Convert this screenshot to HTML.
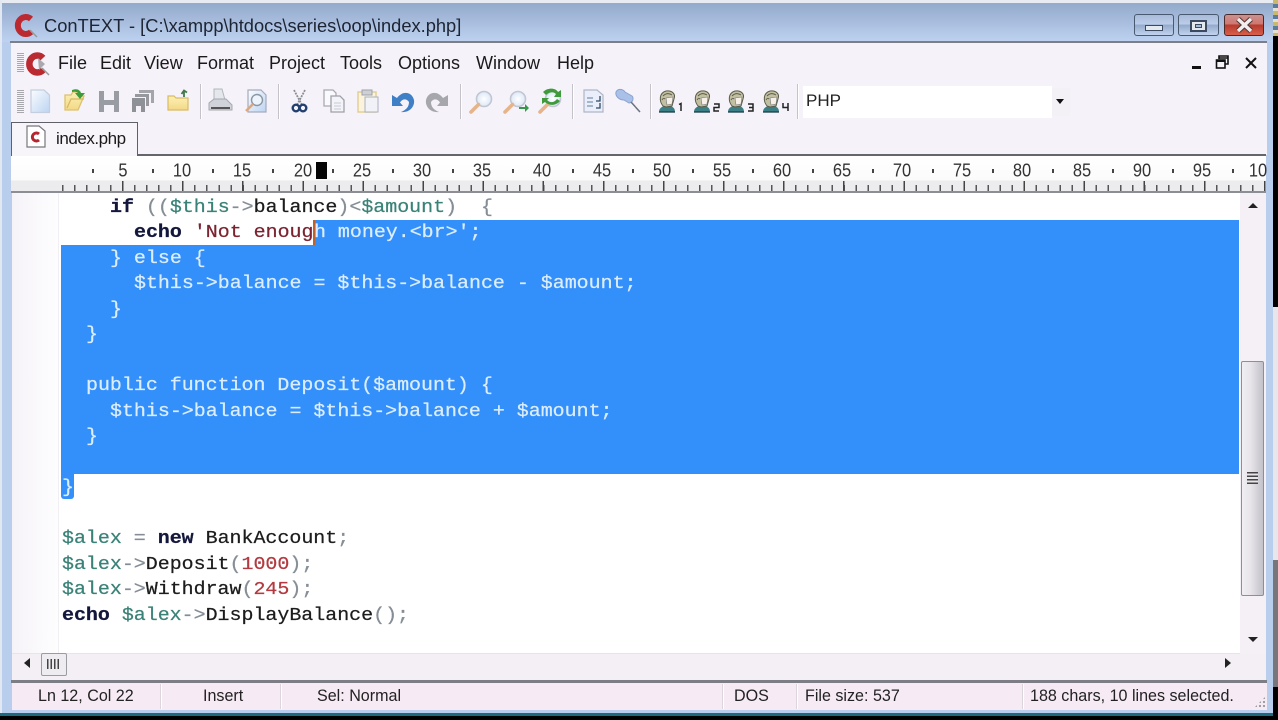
<!DOCTYPE html>
<html><head><meta charset="utf-8"><style>
html,body{margin:0;padding:0;width:1278px;height:720px;overflow:hidden;background:#000}
*{box-sizing:border-box}
.a{position:absolute}
#w{position:absolute;left:0;top:0;width:1273px;height:716px;background:#b9cdec;overflow:hidden;font-family:"Liberation Sans",sans-serif;color:#111}
.t{position:absolute;white-space:pre;line-height:20px}
.m{position:absolute;white-space:pre;top:53px;font-size:18px;line-height:20px;color:#1a1a1a}
.n{position:absolute;top:160px;font-size:17.5px;line-height:20px;color:#333;width:40px;text-align:center;transform:scale(.94,1.06)}
.d{position:absolute;top:169px;width:2px;height:4px;background:#444}
.c{position:absolute;white-space:pre;font-family:"Liberation Mono",monospace;font-size:19.95px;line-height:24px;height:24px;color:#222;-webkit-text-stroke:.25px currentColor;transform:scaleY(.94);transform-origin:0 60%}
.v{color:#3a8277}.p{color:#858d96}.k{color:#14173c;font-weight:bold}.s{color:#7b2330}.u{color:#b23a40}.i{color:#1c1c1c}
.x{color:#dcedff}
.sp{position:absolute;width:2px;top:84px;height:35px;background:#c3c3c8;border-right:1px solid #fff}
.st{position:absolute;top:685px;font-size:16.5px;line-height:22px;color:#222;white-space:pre;transform-origin:0 50%;transform:scaleX(.975)}
.ss{position:absolute;top:684px;height:25px;width:2px;background:#dcd6dc;border-right:1px solid #fff}
.b{position:absolute;top:14px;height:22px;border:1px solid #49596f;border-radius:3px}
</style></head><body>
<div id="w">
<!-- title bar -->
<div class="a" style="left:0;top:2px;width:1273px;height:40px;background:linear-gradient(#93a9cb,#bed2f0)"></div>
<div class="a" style="left:0;top:0;width:1273px;height:3px;background:#e8ecf2"></div>
<svg class="a" style="left:12px;top:12px" width="26" height="28" viewBox="0 0 26 28"><path d="M19 7 A8 8.500 0 1 0 19 20" fill="none" stroke="#bb2a30" stroke-width="6"/><path d="M18 18 L25 25" stroke="#999" stroke-width="1.5"/></svg>
<div class="t" style="left:44px;top:16px;font-size:18.3px;color:#1d2433">ConTEXT - [C:\xampp\htdocs\series\oop\index.php]</div>
<div class="b" style="left:1134px;width:40px;background:linear-gradient(#a8bbd8 0,#bccdea 45%,#94aacb 50%,#c0d2ee 100%)"></div>
<div class="a" style="left:1145px;top:25px;width:18px;height:6px;background:#e4e8ef;border:1px solid #3b4a60"></div>
<div class="b" style="left:1178px;width:41px;background:linear-gradient(#a8bbd8 0,#bccdea 45%,#94aacb 50%,#c0d2ee 100%)"></div>
<div class="a" style="left:1190px;top:20px;width:17px;height:12px;background:#e4e8ef;border:2px solid #3b4a60"></div>
<div class="a" style="left:1195px;top:24px;width:7px;height:4px;background:#a8bbd8;border:1px solid #3b4a60"></div>
<div class="b" style="left:1224px;width:40px;background:linear-gradient(#c9918e 0,#d07770 45%,#b63a2e 50%,#d95f4a 100%);border-color:#4b2a2a"></div>
<svg class="a" style="left:1234px;top:16px" width="21" height="18"><path d="M4 3 L17 15 M17 3 L4 15" stroke="#4b3a3a" stroke-width="5.5"/><path d="M4 3 L17 15 M17 3 L4 15" stroke="#f2eeee" stroke-width="3.4"/></svg>

<!-- main body -->
<div class="a" style="left:10px;top:41px;width:1257px;height:2px;background:#7d7f88"></div>
<div class="a" style="left:11px;top:43px;width:1256px;height:112px;background:#f6f2f9"></div>
<!-- menu -->
<div class="a" style="left:17px;top:53px;width:7px;height:20px;background:repeating-linear-gradient(#a8a8ac 0 1px,#f6f2f9 1px 2px)"></div>
<svg class="a" style="left:25px;top:50px" width="26" height="28" viewBox="0 0 26 28"><path d="M18 8 A8 8.500 0 1 0 18 20" fill="none" stroke="#bb2a30" stroke-width="6.500"/><path d="M13 8 L20 14 L14 20" fill="#a9a9ae"/><path d="M17 18 L24 25" stroke="#999" stroke-width="1.5"/></svg>
<div class="m" style="left:58px">File</div><div class="m" style="left:100px">Edit</div><div class="m" style="left:144px">View</div><div class="m" style="left:197px">Format</div><div class="m" style="left:269px">Project</div><div class="m" style="left:340px">Tools</div><div class="m" style="left:398px">Options</div><div class="m" style="left:476px">Window</div><div class="m" style="left:557px">Help</div>
<div class="a" style="left:1192px;top:66px;width:9px;height:3px;background:#111"></div>
<svg class="a" style="left:1215px;top:55px" width="15" height="15"><path d="M4 4 V1 H13 V9 H10 M4 3 H13" fill="none" stroke="#111" stroke-width="1.6"/><rect x="1.5" y="5" width="8.5" height="8" fill="none" stroke="#111" stroke-width="1.6"/><path d="M1 6 H10" stroke="#111" stroke-width="2"/></svg>
<svg class="a" style="left:1244px;top:56px" width="14" height="14"><path d="M2 2 L12 12 M12 2 L2 12" stroke="#111" stroke-width="2"/></svg>

<!-- toolbar -->
<div class="a" style="left:17px;top:90px;width:7px;height:24px;background:repeating-linear-gradient(#a8a8ac 0 1px,#f6f2f9 1px 2px)"></div>
<svg class="a" style="left:0;top:80px" width="800" height="42" viewBox="0 80 800 42">
<defs>
<linearGradient id="bl" x1="0" y1="0" x2="1" y2="1"><stop offset="0" stop-color="#fbfcff"/><stop offset="1" stop-color="#bcd4f2"/></linearGradient>
<linearGradient id="ye" x1="0" y1="0" x2="0" y2="1"><stop offset="0" stop-color="#fdf0b4"/><stop offset="1" stop-color="#f3d987"/></linearGradient>
<radialGradient id="gl"><stop offset="0" stop-color="#fff"/><stop offset="1" stop-color="#dce8f7"/></radialGradient>
<g id="mag"><circle cx="7" cy="-7" r="7.5" fill="url(#gl)" stroke="#c0c7d2" stroke-width="1.6"/><path d="M1.5 -1.5 L-6 6" stroke="#e6b48a" stroke-width="3.6" stroke-linecap="round"/></g>
<g id="usr"><path d="M1 22 C1 18 4 17 6 16 L12 16 C15 17 17 18 17 22 Z" fill="#3b8087"/><path d="M5 16 C1 11 1 3 8 1 C14 0 18 4 16 9 L14 16 L8 17 Z" fill="#c2c0a2" stroke="#5a5a48" stroke-width="1"/><path d="M8 8 L15 7 L14 14 L9 15 Z" fill="#f6f0e8" stroke="#777" stroke-width=".6"/><path d="M5 6 C8 3 11 3 14 5 M4 10 C5 8 6 8 7 9" fill="none" stroke="#5a5a48" stroke-width=".9"/><path d="M1 22 H17" stroke="#1c3c48" stroke-width="1.3"/></g>
</defs>
<!-- new -->
<path d="M31 90 H44 L49.500 95 V112.500 H31 Z" fill="url(#bl)" stroke="#c4cede" stroke-width="1.2"/>
<!-- open -->
<path d="M65 95 H71 L73 92 H80 V96 H84 L78 110 H65 Z" fill="url(#ye)" stroke="#dcc16e" stroke-width="1.3"/><path d="M67 108 L71 99 H84" fill="none" stroke="#d5b865" stroke-width="1.2"/>
<path d="M72 90 C77 88 80 90 81 93 L85 93 L80 99 L75 93 L78 93 C77 92 75 91 72 92 Z" fill="#3f9a3c"/>
<!-- save -->
<path d="M99 91 H104 V100 H114 V91 H119 V112 H114 V105 H104 V112 H99 Z" fill="#9a9ca3"/>
<!-- save all -->
<path d="M139 90 H154 V103 H151 V93 H139 Z" fill="#a3a5ab"/><path d="M135 94 H149 V106 H146 V97 H135 Z" fill="#96989e"/><path d="M132 98 H145 V112 H141 V106 H136 V112 H132 Z" fill="#8f9198"/>
<!-- folder -->
<path d="M168 96 H174 L176 98 H188 V110 H168 Z" fill="url(#ye)" stroke="#d9bc66" stroke-width="1.2"/><path d="M184 97 V91 M181.500 94 L184 90.500 L187 92.500" fill="none" stroke="#41794a" stroke-width="1.8"/>
<!-- print -->
<path d="M214 89 H222 L225 100 H214 Z" fill="#e4e7ec" stroke="#b2b6be"/><path d="M209 103 L214 99 H226 L232 105 V110 H209 Z" fill="#d0d3d9" stroke="#a5a8b0"/><path d="M211 108 H230" stroke="#555" stroke-width="2"/>
<!-- preview -->
<path d="M248 90 H261 L266 95 V112 H248 Z" fill="url(#bl)" stroke="#a7abbd" stroke-width="1.2"/><circle cx="257" cy="100" r="5.500" fill="#eef4fb" stroke="#8a97a2" stroke-width="1.4"/><path d="M253 104 L246 111" stroke="#e0a878" stroke-width="2.600"/>
<!-- cut -->
<path d="M294 90 L302 105 M305 90 L297 105" stroke="#8a8e94" stroke-width="1.8" stroke-dasharray="2 1"/><circle cx="296" cy="108" r="3.300" fill="none" stroke="#22406f" stroke-width="2.400"/><circle cx="303" cy="108" r="3.300" fill="none" stroke="#22406f" stroke-width="2.400"/>
<!-- copy -->
<path d="M324 90 H333 L336 93 V106 H324 Z" fill="#fafafe" stroke="#a9aab2" stroke-width="1.300"/><path d="M331 96 H340 L344 100 V112 H331 Z" fill="#f3f3f8" stroke="#9fa1aa" stroke-width="1.300"/><path d="M334 103 H341 M334 106 H341 M334 109 H341" stroke="#c5c9d8"/>
<!-- paste -->
<path d="M358 92 H376 V112 H358 Z" fill="#fbf3dc" stroke="#e4cf95" stroke-width="1.500"/><path d="M362 90 H372 V95 H362 Z" fill="#cfd0d6" stroke="#a0a1a8"/><path d="M365 97 H378 V112 H365 Z" fill="#f0f2f8" stroke="#a9b0c0"/>
<!-- undo -->
<path d="M392 95 L392 106 L403 106 L400 102.500 C403 98 407 99 409 102 C409 107 406 110 401 112 C410 113 415 106 414 100 C412 92 403 90 397 98 Z" fill="#3f7fc6"/>
<!-- redo -->
<path d="M448 95 L448 106 L437 106 L440 102.500 C437 98 433 99 431 102 C431 107 434 110 439 112 C430 113 425 106 426 100 C428 92 437 90 443 98 Z" fill="#a6a7ac"/>
<!-- find -->
<use href="#mag" x="477" y="106"/>
<use href="#mag" x="511" y="106"/>
<path d="M519 107 H525 V104 L529 108 L525 112 V109 H519 Z" fill="#35984a"/>
<use href="#mag" x="546" y="106"/>
<path d="M543 92 C548 87 556 88 558 92 L561 90 V97 H554 L556 94 C553 91 549 92 546 95 Z M560 101 C556 106 549 106 545 102 L542 104 V98 H549 L547 100 C550 103 554 103 557 99 Z" fill="#3f9a3c"/>
<!-- doc -->
<path d="M584 90 H597 L603 95 V112 H584 Z" fill="#e9eefa" stroke="#aeb6c6" stroke-width="1.200"/><path d="M587 98 H593 M587 102 H593 M587 106 H593" stroke="#7d93ad" stroke-width="1.200"/><path d="M600 96 V101 H596 M600 103 V108 H596" fill="none" stroke="#2e4a64" stroke-width="1.300"/>
<!-- pin -->
<path d="M616 92 C618 88 623 89 625 92 L632 96 C634 98 633 103 629 103 L624 100 C619 100 615 96 616 92 Z" fill="#a9c1e8" stroke="#8aa3cf"/><path d="M631 102 L640 112" stroke="#6b7280" stroke-width="1.500"/>
<!-- users -->
<use href="#usr" x="658" y="90"/><use href="#usr" x="693" y="90"/><use href="#usr" x="727" y="90"/><use href="#usr" x="762" y="90"/>
<path d="M679 104.500 L681 103.500 V111" fill="none" stroke="#222" stroke-width="1.500"/>
<path d="M714 104 H719 V107.500 H714 V111 H719" fill="none" stroke="#222" stroke-width="1.500"/>
<path d="M748 104 H753 V111 H748 M749 107.500 H753" fill="none" stroke="#222" stroke-width="1.500"/>
<path d="M783 103 V107.500 H788 M788 103 V111" fill="none" stroke="#222" stroke-width="1.500"/>
</svg>
<div class="sp" style="left:200px"></div><div class="sp" style="left:278px"></div><div class="sp" style="left:460px"></div><div class="sp" style="left:572px"></div><div class="sp" style="left:650px"></div><div class="sp" style="left:797px"></div>
<div class="a" style="left:803px;top:86px;width:249px;height:32px;background:#fff"></div>
<div class="a" style="left:1052px;top:88px;width:18px;height:28px;background:#f3f0f6"></div>
<div class="t" style="left:806px;top:91px;font-size:17px;color:#222">PHP</div>
<div class="a" style="left:1056px;top:99px;width:0;height:0;border-left:4px solid transparent;border-right:4px solid transparent;border-top:5px solid #111"></div>

<!-- tab -->
<div class="a" style="left:11px;top:154px;width:1255px;height:2px;background:#64666e"></div>
<div class="a" style="left:11px;top:122px;width:127px;height:34px;background:#f8f5fa;border:1.500px solid #5f6168;border-bottom:0"></div>
<svg class="a" style="left:25px;top:124px" width="22" height="26"><path d="M2 2 H14 L20 7 V23 H2 Z" fill="#fff" stroke="#77777d" stroke-width="1.200"/><path d="M14 10 A4 4 0 1 0 14 16" fill="none" stroke="#b5262e" stroke-width="3"/></svg>
<div class="t" style="left:56px;top:129px;font-size:17px;color:#1a1a1a;letter-spacing:-.45px">index.php</div>

<!-- ruler -->
<div class="a" style="left:11px;top:156px;width:1255px;height:36px;background:linear-gradient(#fff 0,#fbfbfb 24px,#ecebee 25px,#ecebee 100%)"></div>
<div class="a" style="left:62px;top:185px;width:1204px;height:6px;background:repeating-linear-gradient(90deg,#555 0 1.500px,transparent 1.500px 12.02px)"></div>
<div class="a" style="left:122px;top:181px;width:1144px;height:10px;background:repeating-linear-gradient(90deg,#444 0 1.500px,transparent 1.500px 60.1px)"></div>
<div class="a" style="left:11px;top:191px;width:1255px;height:2px;background:#8d8e94"></div>
<div class="n" style="left:103px">5</div><div class="n" style="left:162px">10</div><div class="n" style="left:222px">15</div><div class="n" style="left:283px">20</div><div class="n" style="left:342px">25</div><div class="n" style="left:402px">30</div><div class="n" style="left:462px">35</div><div class="n" style="left:522px">40</div><div class="n" style="left:582px">45</div><div class="n" style="left:642px">50</div><div class="n" style="left:702px">55</div><div class="n" style="left:762px">60</div><div class="n" style="left:822px">65</div><div class="n" style="left:882px">70</div><div class="n" style="left:942px">75</div><div class="n" style="left:1002px">80</div><div class="n" style="left:1062px">85</div><div class="n" style="left:1122px">90</div><div class="n" style="left:1182px">95</div><div class="n" style="left:1238px">10</div>
<div class="d" style="left:92px"></div><div class="d" style="left:152px"></div><div class="d" style="left:212px"></div><div class="d" style="left:272px"></div><div class="d" style="left:332px"></div><div class="d" style="left:392px"></div><div class="d" style="left:452px"></div><div class="d" style="left:512px"></div><div class="d" style="left:572px"></div><div class="d" style="left:632px"></div><div class="d" style="left:692px"></div><div class="d" style="left:752px"></div><div class="d" style="left:812px"></div><div class="d" style="left:872px"></div><div class="d" style="left:932px"></div><div class="d" style="left:992px"></div><div class="d" style="left:1052px"></div><div class="d" style="left:1112px"></div><div class="d" style="left:1172px"></div><div class="d" style="left:1232px"></div>
<div class="a" style="left:316px;top:162px;width:11px;height:17px;background:#050505"></div>

<!-- editor -->
<div class="a" style="left:12px;top:193px;width:1228px;height:461px;background:#fff"></div>
<div class="a" style="left:12px;top:193px;width:46px;height:461px;background:linear-gradient(90deg,#f6f3f8,#fdfdfe)"></div>
<div class="a" style="left:58px;top:193px;width:1px;height:461px;background:#f1eff4"></div>
<!-- selection -->
<div class="a" style="left:314px;top:220px;width:925px;height:26px;background:#3390fa"></div>
<div class="a" style="left:61px;top:245px;width:1178px;height:229px;background:#3390fa"></div>
<div class="a" style="left:61px;top:473px;width:13px;height:26px;background:#3390fa;border-radius:0 0 3px 3px"></div>
<div class="a" style="left:313px;top:220px;width:2px;height:25px;background:#c0602a"></div>
<!-- code -->
<div class="c" style="left:110px;top:195px"><span class="k">if</span> <span class="p">((</span><span class="v">$this</span><span class="p">-&gt;</span><span class="i">balance</span><span class="p">)&lt;</span><span class="v">$amount</span><span class="p">)  {</span></div>
<div class="c" style="left:134px;top:220px"><span class="k">echo</span> <span class="s">'Not enoug</span></div>
<div class="c x" style="left:314px;top:220px">h money.&lt;br&gt;';</div>
<div class="c x" style="left:110px;top:246px">} else {</div>
<div class="c x" style="left:134px;top:271px">$this-&gt;balance = $this-&gt;balance - $amount;</div>
<div class="c x" style="left:110px;top:297px">}</div>
<div class="c x" style="left:86px;top:322px">}</div>
<div class="c x" style="left:86px;top:373px">public function Deposit($amount) {</div>
<div class="c x" style="left:110px;top:399px">$this-&gt;balance = $this-&gt;balance + $amount;</div>
<div class="c x" style="left:86px;top:424px">}</div>
<div class="c x" style="left:62px;top:475px">}</div>
<div class="c" style="left:62px;top:526px"><span class="v">$alex</span> <span class="p">=</span> <span class="k">new</span> <span class="i">BankAccount</span><span class="p">;</span></div>
<div class="c" style="left:62px;top:552px"><span class="v">$alex</span><span class="p">-&gt;</span><span class="i">Deposit</span><span class="p">(</span><span class="u">1000</span><span class="p">);</span></div>
<div class="c" style="left:62px;top:577px"><span class="v">$alex</span><span class="p">-&gt;</span><span class="i">Withdraw</span><span class="p">(</span><span class="u">245</span><span class="p">);</span></div>
<div class="c" style="left:62px;top:603px"><span class="k">echo</span> <span class="v">$alex</span><span class="p">-&gt;</span><span class="i">DisplayBalance</span><span class="p">();</span></div>

<!-- v scrollbar -->
<div class="a" style="left:1240px;top:193px;width:26px;height:461px;background:#f4f0f6"></div>
<div class="a" style="left:1241px;top:361px;width:23px;height:235px;background:linear-gradient(90deg,#f1eef3,#e8e5ea 40%,#c3c1c9);border:1px solid #8e8f96;border-radius:2px"></div>
<div class="a" style="left:1247px;top:472px;width:11px;height:12px;background:repeating-linear-gradient(#444 0 1.500px,#e8e5ea 1.500px 3.500px)"></div>
<div class="a" style="left:1248px;top:203px;width:0;height:0;border-left:5px solid transparent;border-right:5px solid transparent;border-bottom:5px solid #222"></div>
<div class="a" style="left:1248px;top:637px;width:0;height:0;border-left:5px solid transparent;border-right:5px solid transparent;border-top:5px solid #222"></div>
<!-- h scrollbar -->
<div class="a" style="left:12px;top:654px;width:1254px;height:27px;background:#f3eff5"></div>
<div class="a" style="left:12px;top:653px;width:1228px;height:1px;background:#e8e5ea"></div>
<div class="a" style="left:24px;top:658px;width:0;height:0;border-top:5px solid transparent;border-bottom:5px solid transparent;border-right:6px solid #222"></div>
<div class="a" style="left:41px;top:653px;width:26px;height:23px;background:#efecf1;border:1px solid #9b9ba2;border-radius:2px"></div>
<div class="a" style="left:47px;top:659px;width:13px;height:10px;background:repeating-linear-gradient(90deg,#444 0 1.500px,#efecf1 1.500px 3.500px)"></div>
<div class="a" style="left:1225px;top:658px;width:0;height:0;border-top:5px solid transparent;border-bottom:5px solid transparent;border-left:6px solid #222"></div>
<!-- status -->
<div class="a" style="left:11px;top:680px;width:1256px;height:3px;background:#7d7e85"></div>
<div class="a" style="left:12px;top:683px;width:1255px;height:27px;background:#f6ebf4"></div>
<div class="ss" style="left:160px"></div><div class="ss" style="left:280px"></div><div class="ss" style="left:722px"></div><div class="ss" style="left:796px"></div><div class="ss" style="left:1022px"></div>
<div class="st" style="left:38px">Ln 12, Col 22</div>
<div class="st" style="left:203px">Insert</div>
<div class="st" style="left:317px">Sel: Normal</div>
<div class="st" style="left:734px">DOS</div>
<div class="st" style="left:805px">File size: 537</div>
<div class="st" style="left:1030px">188 chars, 10 lines selected.</div>
<div class="a" style="left:1254px;top:696px;width:12px;height:12px;background:radial-gradient(circle,#9a9aa0 1px,transparent 1.300px) 0 0/4px 4px;clip-path:polygon(100% 0,100% 100%,0 100%)"></div>
<!-- window left edge highlight -->
<div class="a" style="left:0;top:0;width:2px;height:716px;background:#e2e8f2"></div>
<div class="a" style="left:0;top:713px;width:1273px;height:3px;background:#1d6a7d"></div>
</div>
<!-- desktop right strip -->
<div class="a" style="left:1273px;top:0;width:5px;height:36px;background:repeating-linear-gradient(#c9b96a 0 4px,#5b7b9a 4px 8px,#e5e0d0 8px 11px)"></div>
<div class="a" style="left:1273px;top:307px;width:5px;height:253px;background:#e6e6ec"></div>
<div class="a" style="left:1273px;top:560px;width:5px;height:127px;background:#77777b"></div>
</body></html>
